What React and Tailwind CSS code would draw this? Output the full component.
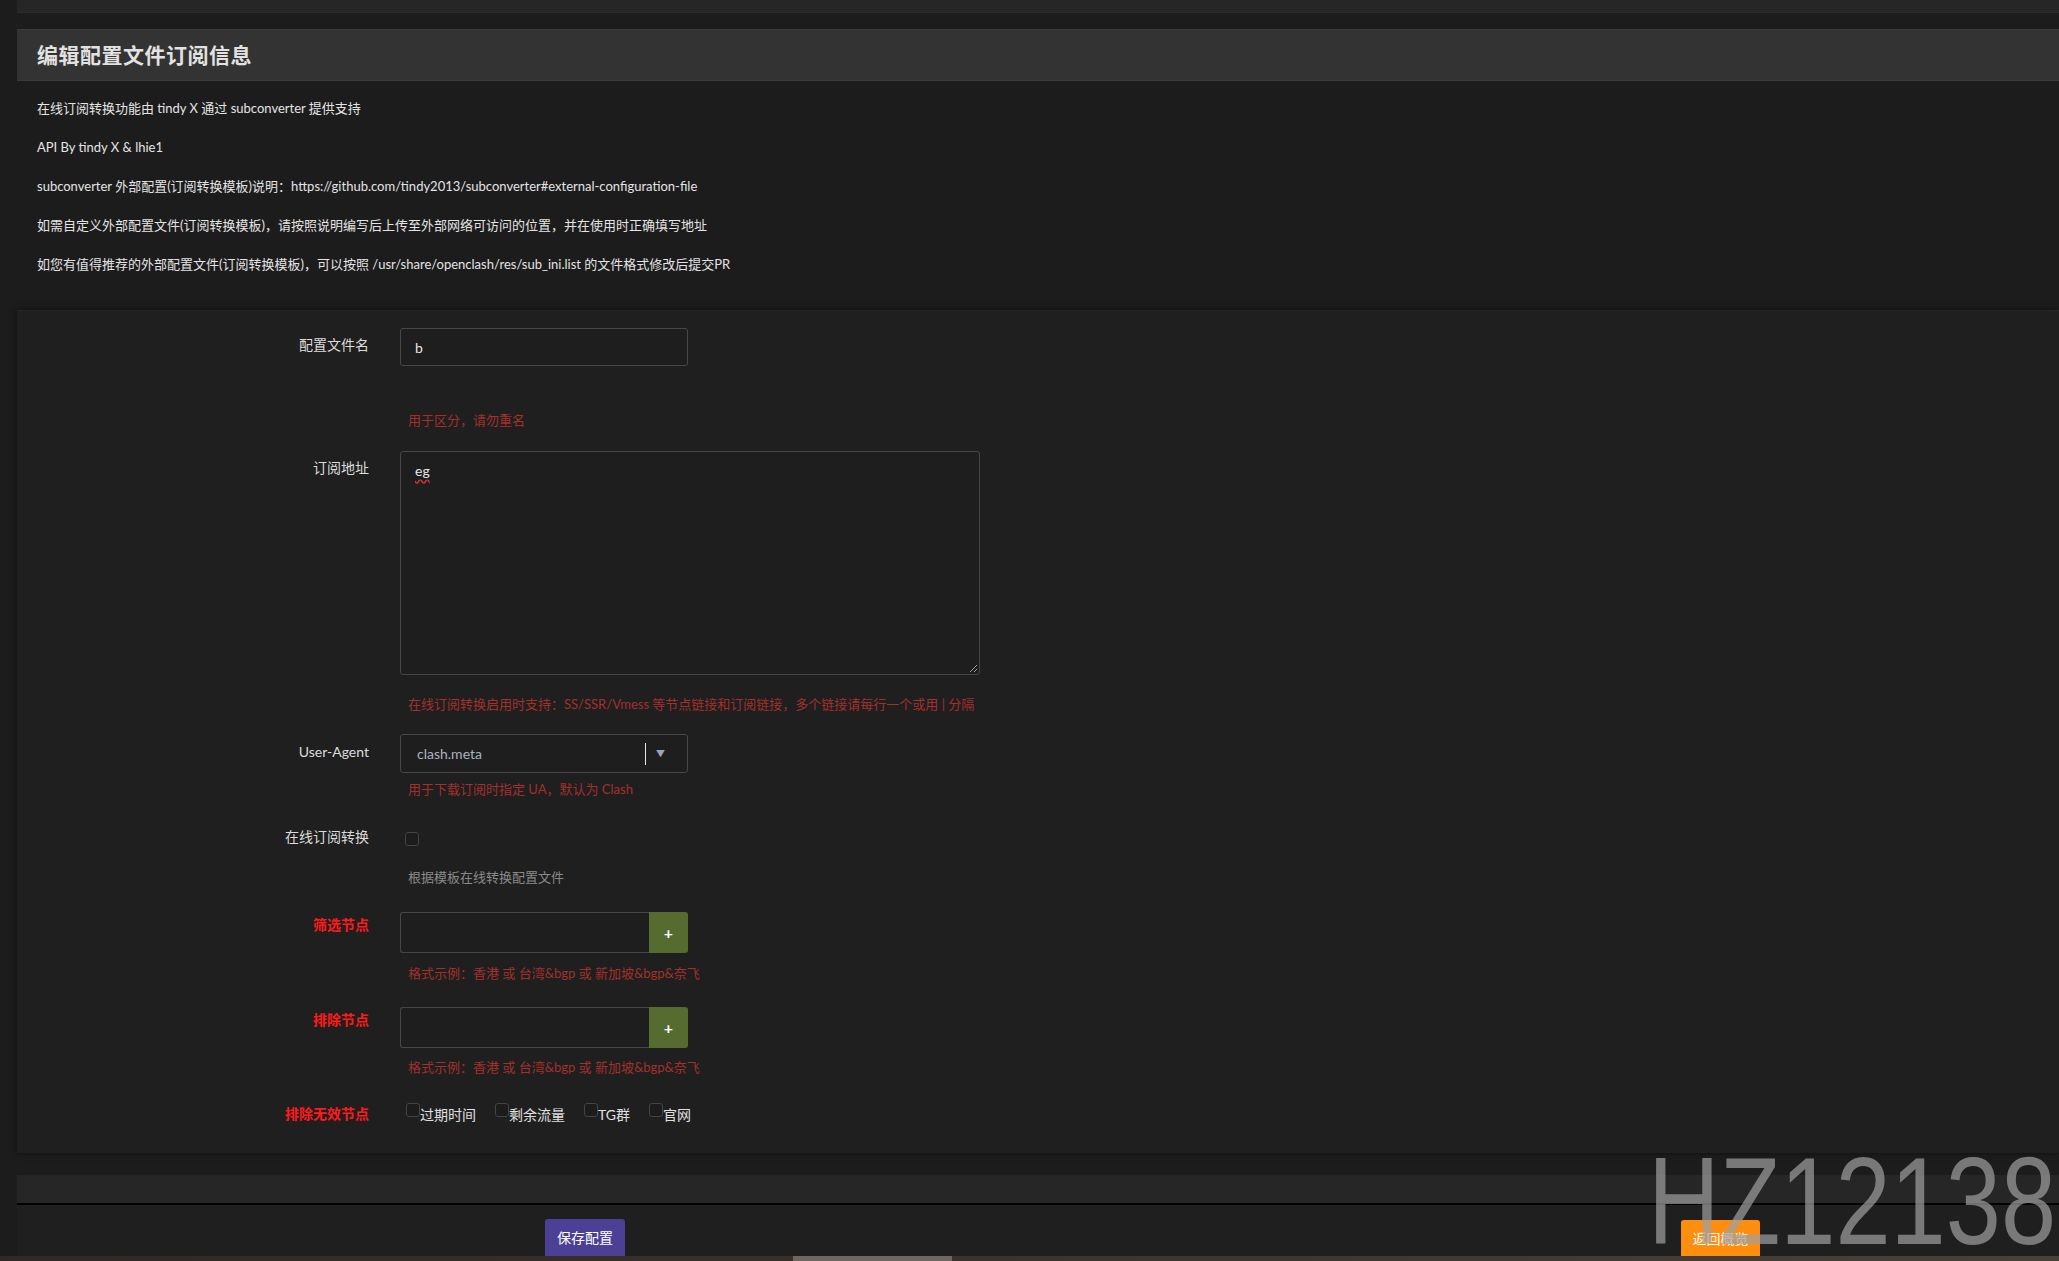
import React from "react";

const FONT = { fontFamily: 'Lato, "Noto Sans CJK SC", sans-serif' };

function Hint({ children, className = "" }) {
  return (
    <div className={`text-[13px] leading-[18px] text-[#a3302c] pl-[8px] whitespace-nowrap ${className}`}>{children}</div>
  );
}

function Label({ children, red, className = "" }) {
  return (
    <div
      className={`w-[352px] shrink-0 text-right text-[14px] leading-[20px] ${
        red ? "text-[#ff1a1a] font-bold" : "text-[#dcdcdc]"
      } ${className}`}
    >
      {children}
    </div>
  );
}

function Box() {
  return <span className="inline-block w-[14px] h-[14px] rounded-[3px] border border-[#444] bg-[#1c1c1c]" />;
}

function AddInput() {
  return (
    <div className="flex w-[288px] h-[41px]">
      <div className="flex-1 border border-[#474747] border-r-0 rounded-l-[3px] bg-[#1e1e1e]" />
      <button className="w-[39px] rounded-r-[3px] bg-[#566b2f] text-white text-[16px] font-bold leading-none">+</button>
    </div>
  );
}

export default function App() {
  const notes = [
    "在线订阅转换功能由 tindy X 通过 subconverter 提供支持",
    "API By tindy X & lhie1",
    "subconverter 外部配置(订阅转换模板)说明：https://github.com/tindy2013/subconverter#external-configuration-file",
    "如需自定义外部配置文件(订阅转换模板)，请按照说明编写后上传至外部网络可访问的位置，并在使用时正确填写地址",
    "如您有值得推荐的外部配置文件(订阅转换模板)，可以按照 /usr/share/openclash/res/sub_ini.list 的文件格式修改后提交PR",
  ];
  const excludes = ["过期时间", "剩余流量", "TG群", "官网"];

  return (
    <div className="relative w-[2059px] h-[1261px] overflow-hidden bg-[#1c1c1c] text-[#dcdcdc]" style={FONT}>
      <div className="pl-[17px]">
        {/* top strip */}
        <div className="h-[13px] bg-[#262626] border-b border-[#2c2c2c]" />

        {/* section header */}
        <div className="mt-[16px] h-[52px] bg-[#333333] border-y border-[#3a3a3a] flex items-center pl-[20px]">
          <h2 className="text-[21px] font-bold text-[#e2e2e2] tracking-[0.5px]">编辑配置文件订阅信息</h2>
        </div>

        {/* notes */}
        <div className="pt-[8px] pl-[20px]">
          {notes.map((n, i) => (
            <div key={i} className="h-[39px] leading-[39px] text-[13px] text-[#e4e4e4] whitespace-nowrap">
              {n}
            </div>
          ))}
        </div>

        {/* form panel */}
        <div className="mt-[26px] h-[843px] bg-[#1f1f1f] border-t border-[#252525] shadow-[0_0_6px_rgba(0,0,0,0.5)] pt-[17px]">
          {/* 配置文件名 */}
          <div className="flex">
            <Label className="pt-[7px]">配置文件名</Label>
            <div className="pl-[31px]">
              <div className="w-[288px] h-[38px] border border-[#474747] rounded-[3px] bg-[#1e1e1e] flex items-center px-[14px] text-[14px] text-[#e6e6e6]">
                b
              </div>
              <Hint className="mt-[45px]">用于区分，请勿重名</Hint>
            </div>
          </div>

          {/* 订阅地址 */}
          <div className="flex mt-[22px]">
            <Label className="pt-[7px]">订阅地址</Label>
            <div className="pl-[31px]">
              <div className="relative w-[580px] h-[224px] border border-[#474747] rounded-[3px] bg-[#1e1e1e] px-[14px] pt-[8px] text-[14px] text-[#e6e6e6]">
                <span className="underline decoration-wavy decoration-[#e03030] underline-offset-[3px]">eg</span>
                <svg className="absolute right-[1px] bottom-[1px]" width="9" height="9" viewBox="0 0 9 9">
                  <path d="M8 1 L1 8 M8 5 L5 8" stroke="#9a9a9a" strokeWidth="1" />
                </svg>
              </div>
              <Hint className="mt-[20px]">在线订阅转换启用时支持：SS/SSR/Vmess 等节点链接和订阅链接，多个链接请每行一个或用 | 分隔</Hint>
            </div>
          </div>

          {/* User-Agent */}
          <div className="flex mt-[21px]">
            <Label className="pt-[8px]">User-Agent</Label>
            <div className="pl-[31px]">
              <div className="w-[288px] h-[39px] border border-[#474747] rounded-[3px] bg-[#1e1e1e] flex items-center pl-[16px] pr-[22px] text-[14px] text-[#aab3c0]">
                <span className="flex-1">clash.meta</span>
                <span className="w-px h-[22px] bg-[#e6e6e6] mr-[10px]" />
                <span className="text-[9px] text-[#9aa6b8]">▼</span>
              </div>
              <Hint className="mt-[7px]">用于下载订阅时指定 UA，默认为 Clash</Hint>
            </div>
          </div>

          {/* 在线订阅转换 */}
          <div className="flex mt-[29px]">
            <Label>在线订阅转换</Label>
            <div className="pl-[31px]">
              <div className="pt-[5px] pl-[5px] flex">
                <Box />
              </div>
              <div className="mt-[22px] pl-[8px] text-[13px] leading-[18px] text-[#8a8a8a]">根据模板在线转换配置文件</div>
            </div>
          </div>

          {/* 筛选节点 */}
          <div className="flex mt-[26px]">
            <Label red className="pt-[3px]">筛选节点</Label>
            <div className="pl-[31px]">
              <AddInput />
              <Hint className="mt-[11px]">格式示例：香港 或 台湾&amp;bgp 或 新加坡&amp;bgp&amp;奈飞</Hint>
            </div>
          </div>

          {/* 排除节点 */}
          <div className="flex mt-[25px]">
            <Label red className="pt-[3px]">排除节点</Label>
            <div className="pl-[31px]">
              <AddInput />
              <Hint className="mt-[10px]">格式示例：香港 或 台湾&amp;bgp 或 新加坡&amp;bgp&amp;奈飞</Hint>
            </div>
          </div>

          {/* 排除无效节点 */}
          <div className="flex mt-[28px]">
            <Label red>排除无效节点</Label>
            <div className="pl-[37px] flex gap-[19px]">
              {excludes.map((e) => (
                <label key={e} className="flex items-start text-[14px] leading-[20px] text-[#e0e0e0]">
                  <span className="-mt-[2px]">
                    <Box />
                  </span>
                  <span className="pt-[1px]">{e}</span>
                </label>
              ))}
            </div>
          </div>
        </div>

        {/* action bar */}
        <div className="mt-[22px] h-[28px] bg-[#262626]" />
        <div className="h-[2px] bg-black" />
        <div className="h-[51px] bg-[#1f1f1f] flex items-end">
          <button className="ml-[528px] w-[80px] h-[37px] rounded-t-[3px] bg-[#4c3f96] text-white text-[14px]">保存配置</button>
          <button className="ml-[1056px] w-[79px] h-[36px] rounded-t-[3px] bg-[#ff8e0e] text-white text-[14px]">返回概览</button>
        </div>
      </div>

      {/* bottom taskbar strip */}
      <div className="flex h-[7px] bg-gradient-to-r from-[#2e2826] via-[#3d322c] to-[#4a4036]">
        <div className="w-[793px]" />
        <div className="w-[159px] bg-[#6d675f]" />
      </div>

      {/* watermark */}
      <div
        className="absolute left-[1648px] top-[1139px] text-[124px] leading-none text-[#a0a0a0]/70 origin-left scale-x-[0.8] whitespace-nowrap pointer-events-none"
        style={{ fontFamily: '"Liberation Sans", Arial, sans-serif' }}
      >
        HZ12138
      </div>
    </div>
  );
}
